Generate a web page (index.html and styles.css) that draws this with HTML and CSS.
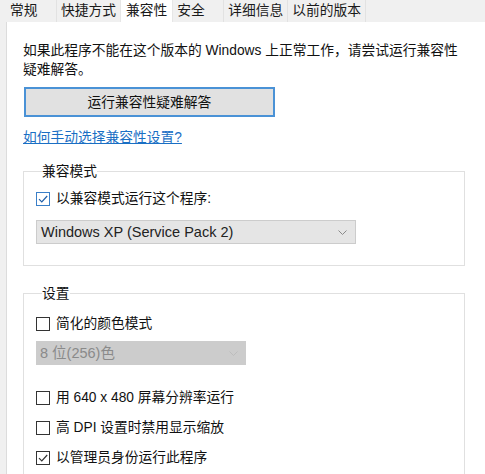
FILE: index.html
```html
<!DOCTYPE html>
<html lang="zh-CN">
<head>
<meta charset="utf-8">
<title>属性 - 兼容性</title>
<link rel="stylesheet" href="styles.css">
</head>
<body>
<div class="dialog">
  <div class="tabs">
    <div class="tab tab-min">常规</div>
    <div class="tab">快捷方式</div>
    <div class="tab active">兼容性</div>
    <div class="tab tab-min">安全</div>
    <div class="tab">详细信息</div>
    <div class="tab">以前的版本</div>
  </div>
  <div class="panel">
    <p class="intro">如果此程序不能在这个版本的 Windows 上正常工作，请尝试运行兼容性疑难解答。</p>
    <button class="btn" type="button">运行兼容性疑难解答</button>
    <a class="link" href="#">如何手动选择兼容性设置?</a>

    <fieldset class="group group-compat">
      <legend>兼容模式</legend>
      <label class="check">
        <span class="box box-focus"><svg width="12" height="12" viewBox="0 0 12 12"><path d="M2 6.2 L4.8 9 L10.2 3" fill="none" stroke="#1f5fa8" stroke-width="1.2"/></svg></span>
        <span>以兼容模式运行这个程序:</span>
      </label>
      <div class="select select-wide">
        <span>Windows XP (Service Pack 2)</span>
        <svg class="chev" width="9" height="5" viewBox="0 0 9 5"><path d="M0.5 0.5 L4.5 4.5 L8.5 0.5" fill="none" stroke="#8a8a8a" stroke-width="1"/></svg>
      </div>
    </fieldset>

    <fieldset class="group group-settings">
      <legend>设置</legend>
      <label class="check">
        <span class="box"></span>
        <span>简化的颜色模式</span>
      </label>
      <div class="select select-disabled">
        <span>8 位(256)色</span>
        <svg class="chev" width="9" height="5" viewBox="0 0 9 5"><path d="M0.5 0.5 L4.5 4.5 L8.5 0.5" fill="none" stroke="#bdbdbd" stroke-width="1"/></svg>
      </div>
      <label class="check check-gap">
        <span class="box"></span>
        <span>用 640 x 480 屏幕分辨率运行</span>
      </label>
      <label class="check">
        <span class="box"></span>
        <span>高 DPI 设置时禁用显示缩放</span>
      </label>
      <label class="check">
        <span class="box"><svg width="12" height="12" viewBox="0 0 12 12"><path d="M2 6.2 L4.8 9 L10.2 3" fill="none" stroke="#333" stroke-width="1.2"/></svg></span>
        <span>以管理员身份运行此程序</span>
      </label>
    </fieldset>
  </div>
</div>
</body>
</html>
```
FILE: styles.css
```css
* { box-sizing: border-box; }

html, body {
  margin: 0;
  padding: 0;
  height: 100%;
  overflow: hidden;
}

body {
  background: #f0f0f0;
  font-family: "Liberation Sans", "Noto Sans CJK SC", sans-serif;
  font-size: 13.75px;
  line-height: 19px;
  color: #111;
}

.dialog {
  display: flex;
  flex-direction: column;
  height: 100%;
}

.tabs {
  display: flex;
  height: 22px;
  padding-left: 6px;
  background: #f0f0f0;
}

.tab {
  height: 22px;
  line-height: 22px;
  padding: 0 4px;
  background: #f0f0f0;
  border-right: 1px solid #e2e2e2;
  white-space: nowrap;
  color: #1a1a1a;
}

.tab-min { min-width: 51px; }

.tab.active {
  background: #fff;
  padding: 0 5px;
  border-right: 1px solid #e6e6e6;
  border-left: 1px solid #e6e6e6;
  margin-left: -1px;
}

.panel {
  flex: 1;
  margin-left: 6px;
  background: #fff;
  border-left: 1px solid #dcdcdc;
  padding: 19px 20px 0 16px;
  display: flex;
  flex-direction: column;
  align-items: flex-start;
}

.intro {
  margin: 0;
  width: 100%;
}

.btn {
  margin: 8px 0 0 1px;
  width: 251px;
  height: 30px;
  background: #e1e1e1;
  border: 2px solid #4a92d6;
  font: inherit;
  color: #111;
  padding: 0;
}

.link {
  margin-top: 11px;
  color: #1a6fc4;
  text-decoration: underline;
}

.group {
  margin: 15px 0 0 0;
  width: 100%;
  border: 1px solid #e0e0e0;
  padding: 8px 12px 21px 12px;
  min-width: 0;
}

.group legend {
  padding: 0;
  margin-left: 6px;
  line-height: 19px;
}

.group-settings {
  margin-top: 18px;
  padding-top: 11px;
  border-bottom: none;
  flex: 1;
}

.check {
  display: flex;
  align-items: center;
  height: 19px;
  gap: 6px;
}

.group-settings .check + .check { margin-top: 11px; }
.group-settings .check-gap { margin-top: 23px; }

.box {
  width: 14px;
  height: 14px;
  border: 1px solid #333;
  background: #fff;
  display: flex;
  align-items: center;
  justify-content: center;
}

.box-focus { border-color: #3a7fc8; }

.select {
  height: 24px;
  display: flex;
  align-items: center;
  justify-content: space-between;
  padding: 0 8px 0 4px;
  font-size: 14.5px;
}

.select-wide {
  margin-top: 12px;
  width: 320px;
  background: #e5e5e5;
  border: 1px solid #cccccc;
  color: #222;
}

.select-disabled {
  margin-top: 8px;
  width: 210px;
  background: #cccccc;
  color: #8a8a8a;
}

.chev { display: block; }
```
